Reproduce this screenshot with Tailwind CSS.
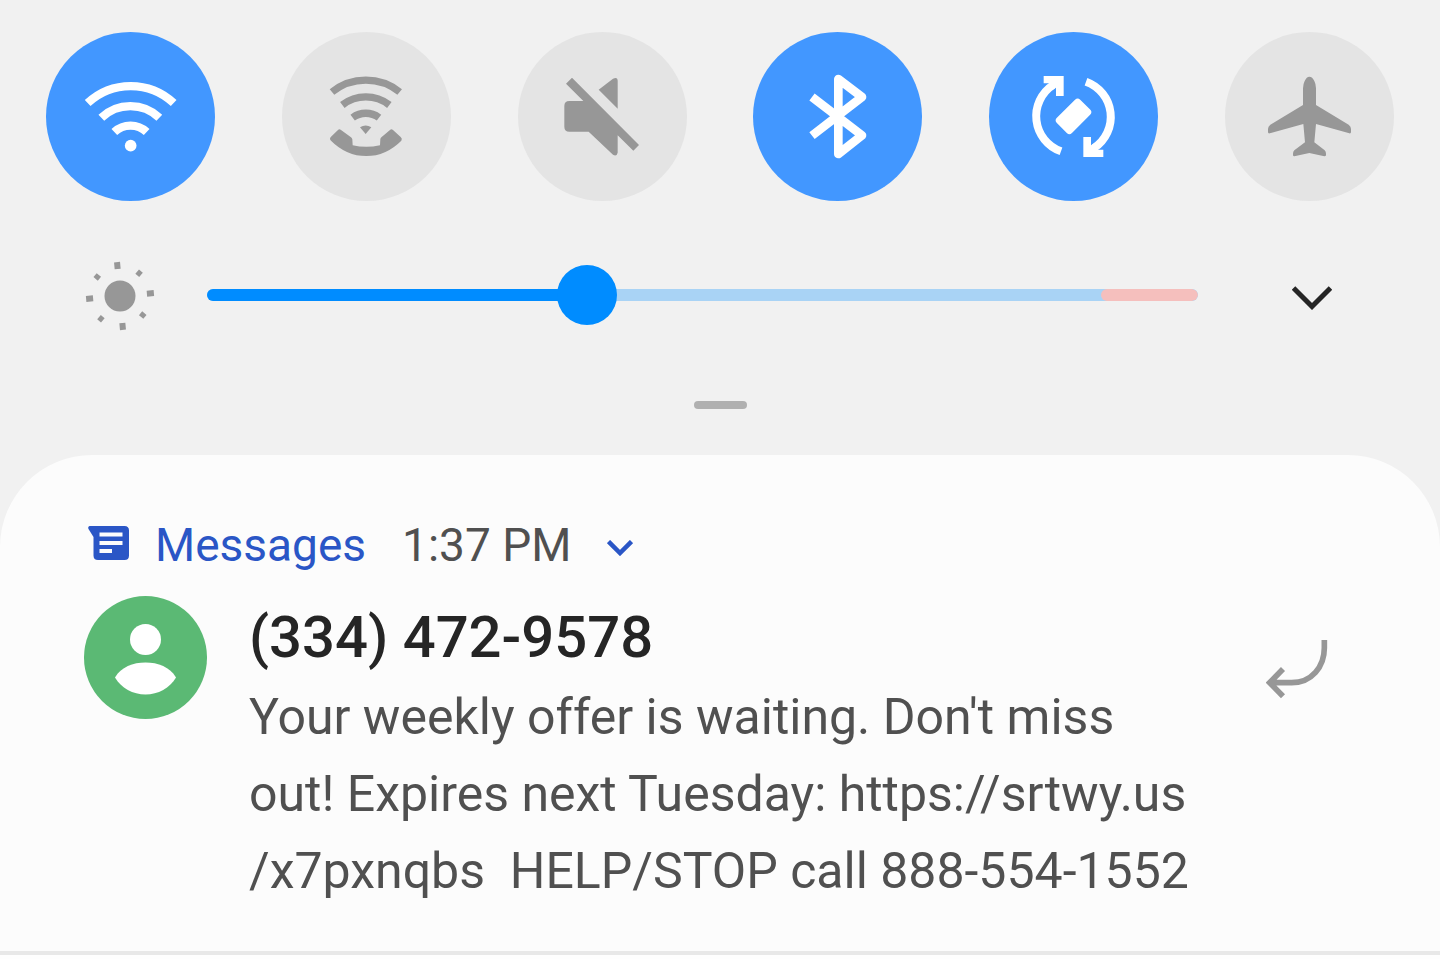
<!DOCTYPE html>
<html lang="en">
<head>
  <meta charset="UTF-8" />
  <meta name="viewport" content="width=device-width, initial-scale=1.0"/>
  <title>Notifications</title>
  <!-- Tailwind CSS -->
  <script src="https://cdn.jsdelivr.net/npm/@tailwindcss/browser@4"></script>
</head>
<body class="bg-[#fefefe] font-['Roboto',sans-serif]">

  <main class="bg-[#f1f1f1]">

    <!-- QUICK SETTINGS -->
    <section class="flex justify-between px-[46px] pt-8" aria-label="Quick settings">
      <button type="button" aria-label="Wi-Fi" aria-pressed="true" class="size-[169px] rounded-full bg-[#4297ff] text-white">
        <svg class="size-full" viewBox="18 21 507 507" fill="none" stroke="currentColor" stroke-width="25">
          <path d="M143 234a189 189 0 0 1 258 0M184 278a126 126 0 0 1 174 0M223 321a71 71 0 0 1 97 0"/>
          <circle cx="272" cy="362" r="17.500" fill="currentColor" stroke="none"/>
        </svg>
      </button>
      <button type="button" aria-label="Wi-Fi calling" aria-pressed="false" class="size-[169px] rounded-full bg-[#e4e4e4] text-[#979797]">
        <svg class="size-full" viewBox="17 21 507 507" fill="none" stroke="currentColor" stroke-width="22">
          <path d="M167 201a163 163 0 0 1 203 0M198 240a115 115 0 0 1 141 0M229 278a66 66 0 0 1 79 0"/>
          <path fill="currentColor" stroke="none" d="M251 307q17-11 34 0l-17 20z"/>
          <path fill="currentColor" stroke="none" d="M185 315q4-4 9 0l29 21q4 3 5 7l1 18q40 9 82 0l1-18q0-4 4-7l25-21q4-4 9 0l23 21q6 5 2 11q-46 46-105 46q-60 0-106-46q-6-6 0-12z"/>
        </svg>
      </button>
      <button type="button" aria-label="Mute" aria-pressed="false" class="size-[169px] rounded-full bg-[#e4e4e4] text-[#979797]">
        <svg class="size-full" viewBox="17 21 507 507" fill="currentColor">
          <path d="M259 194l43-33q14-7 14 7v83z"/>
          <path d="M179 158l201 202-17 17-47-46v52q-3 13-14 6l-73-69h-58q-15 0-15-15v-62q0-15 15-15h42l-52-52z"/>
        </svg>
      </button>
      <button type="button" aria-label="Bluetooth" aria-pressed="true" class="size-[169px] rounded-full bg-[#4297ff] text-white">
        <svg class="size-full" viewBox="15 21 507 507" fill="none" stroke="currentColor" stroke-width="26" stroke-linejoin="round">
          <path d="M192 216l150 115-71 56V162l71 54-150 116"/>
        </svg>
      </button>
      <button type="button" aria-label="Auto rotate" aria-pressed="true" class="size-[169px] rounded-full bg-[#4297ff] text-white">
        <svg class="size-full" viewBox="15 21 507 507" fill="none" stroke="currentColor" stroke-width="24">
          <path d="M231 379a112 112 0 0 1-24-199M306 170a112 112 0 0 1 24 199"/>
          <path fill="currentColor" stroke="none" d="M179 153h60v60h-23v-25l-12 8-16-14 12-7h-21zM358 396h-60v-60h23v25l12-8 16 14-12 7h21z"/>
          <rect x="219" y="242" width="99" height="64" rx="11" fill="currentColor" stroke="none" transform="rotate(-45 268.500 274)"/>
        </svg>
      </button>
      <button type="button" aria-label="Airplane mode" aria-pressed="false" class="size-[169px] rounded-full bg-[#e4e4e4] text-[#979797]">
        <svg class="size-full" viewBox="15 21 507 507" fill="currentColor">
          <path d="M268 155q9 0 15 13 5 10 5 22v50l98 59q7 5 7 13v9q0 5-5 4l-100-28-5 55 31 24q4 4 4 10v4q0 4-5 4l-45-10-45 10q-4 0-4-4v-4q0-6 4-10l32-24-5-55-101 28q-5 1-5-4v-9q0-8 7-13l98-59v-50q0-12 5-22 6-13 14-13z"/>
        </svg>
      </button>
    </section>

    <!-- BRIGHTNESS -->
    <section class="mt-16 flex items-center pl-[84px] pr-[108px]">
      <svg class="mr-[51px] size-[72px] -my-1.5 shrink-0 text-[#979797]" viewBox="0 0 72 72" fill="none" stroke="currentColor">
        <circle cx="36" cy="37" r="15.500" fill="currentColor" stroke="none"/>
        <g transform="rotate(-5 36 37)" stroke-width="6">
          <path d="M36 3v7M36 64v7M2 37h7M63 37h7"/>
          <path d="M13 14l4 4M55 56l4 4M59 14l-4 4M17 56l-4 4" stroke-width="5"/>
        </g>
      </svg>
      <div class="relative flex h-[60px] flex-1 items-center">
        <div class="flex h-3 w-full justify-between overflow-hidden rounded-md bg-[#a9d3f5]">
          <div class="bg-[#008cff]" style="width: 38.400%"></div>
          <div class="rounded-md bg-[#f5bfbd]" style="width: 9.800%"></div>
        </div>
        <input type="range" min="0" max="255" value="96" aria-label="Brightness"
               class="absolute inset-0 size-full appearance-none bg-transparent
                      [&::-webkit-slider-thumb]:size-[60px] [&::-webkit-slider-thumb]:appearance-none
                      [&::-webkit-slider-thumb]:rounded-full [&::-webkit-slider-thumb]:bg-[#008cff]"/>
      </div>
      <button type="button" aria-label="Brightness options" class="ml-[94px] text-[#252525]">
        <svg class="mt-1.5 h-6 w-10" viewBox="0 0 40 24" fill="none" stroke="currentColor" stroke-width="5">
          <path d="M1.500 2L20 20.500 38.500 2"/>
        </svg>
      </button>
    </section>

    <!-- DRAG HANDLE -->
    <div class="mx-auto mt-[76px] h-2 w-[53px] rounded-full bg-[#b0b0b0]"></div>

    <!-- NOTIFICATION -->
    <article class="mt-[46px] rounded-t-[92px] border-b-4 border-[#e8e8e8] bg-[#fcfcfc] pb-[41px] pl-[84px] pr-[112px] pt-[60px]">
      <header class="flex h-[60px] items-center pl-1 text-[46px] leading-[60px]">
        <svg class="mb-1 mr-[26px] h-[34px] w-[41px] text-[#2a56c6]" viewBox="0 0 41 34" fill="currentColor">
          <path d="M1.500 0h35q4.500 0 4.500 4.500v25q0 4.500-4.500 4.500h-26.500q-4.500 0-4.500-4.500V11L.5 3q-1-2 1-3z"/>
          <path d="M11.500 8.500h23M11.500 17h23M11.500 25h12.500" stroke="#fcfcfc" stroke-width="4"/>
        </svg>
        <span class="text-[#2a56c6]">Messages</span>
        <time class="ml-9 text-[#505050]">1:37 PM</time>
        <button type="button" aria-label="Expand" class="ml-9 text-[#2a56c6]">
          <svg class="mt-1.5 h-4 w-[26px]" viewBox="0 0 26 16" fill="none" stroke="currentColor" stroke-width="4.500">
            <path d="M1.500 1.500L13 13 24.500 1.500"/>
          </svg>
        </button>
      </header>
      <div class="mt-[21px] flex items-start">
        <svg class="size-[123px] shrink-0" viewBox="0 0 123 123" fill="#fff">
          <circle cx="61.500" cy="61.500" r="61.500" fill="#5bb974"/>
          <circle cx="61.500" cy="43.500" r="15.500"/>
          <path d="M31 81.500C37 71 49 66.500 61.500 66.500S86 71 92 81.500C86 92 74 98.500 61.500 98.500S37 92 31 81.500z"/>
        </svg>
        <div class="ml-[42px] flex-1">
          <h2 class="text-[58px] font-medium leading-[83px] text-[#252525]">(334) 472-9578</h2>
          <p class="text-[50px] leading-[77px] text-[#505050]">Your weekly offer is waiting. Don't miss out! Expires next Tuesday: https://srtwy.us<wbr>/x7pxnqbs&nbsp; HELP/STOP call 888-554-1552</p>
        </div>
        <button type="button" aria-label="Reply" class="ml-[66px] mt-11 text-[#979797]">
          <svg class="h-[59px] w-[62px]" viewBox="48 60 186 177" fill="none" stroke="currentColor" stroke-width="17">
            <path d="M223 60v24C223 140 185 188 125 188H62M99 147l-40 41 40 41"/>
          </svg>
        </button>
      </div>
    </article>

  </main>

</body>
</html>
